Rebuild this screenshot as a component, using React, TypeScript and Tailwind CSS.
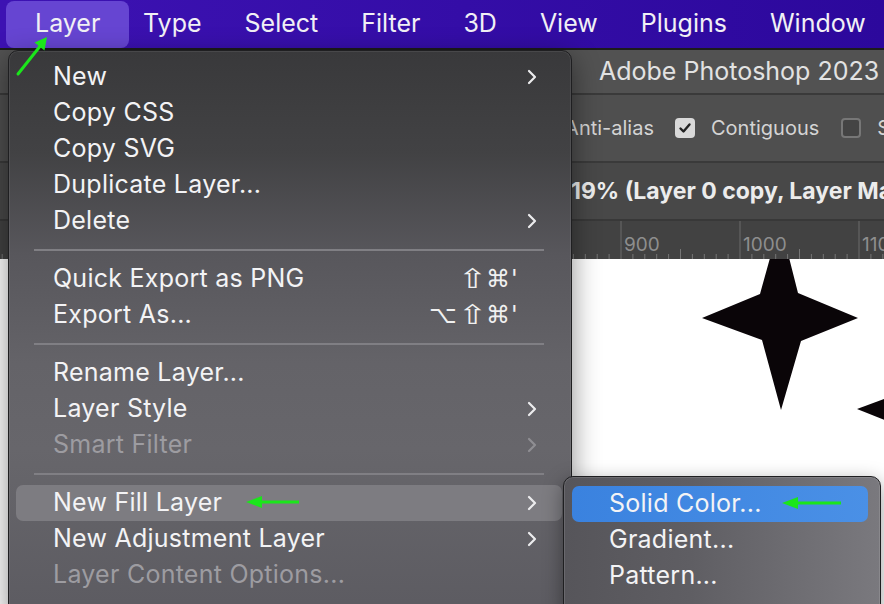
import React from "react";

type Row =
  | { kind: "item"; label: string; sub?: boolean; disabled?: boolean; shortcut?: string[]; active?: boolean }
  | { kind: "sep" };

const rows: Row[] = [
  { kind: "item", label: "New", sub: true },
  { kind: "item", label: "Copy CSS" },
  { kind: "item", label: "Copy SVG" },
  { kind: "item", label: "Duplicate Layer..." },
  { kind: "item", label: "Delete", sub: true },
  { kind: "sep" },
  { kind: "item", label: "Quick Export as PNG", shortcut: ["⇧", "⌘", "'"] },
  { kind: "item", label: "Export As...", shortcut: ["⌥", "⇧", "⌘", "'"] },
  { kind: "sep" },
  { kind: "item", label: "Rename Layer..." },
  { kind: "item", label: "Layer Style", sub: true },
  { kind: "item", label: "Smart Filter", sub: true, disabled: true },
  { kind: "sep" },
  { kind: "item", label: "New Fill Layer", sub: true, active: true },
  { kind: "item", label: "New Adjustment Layer", sub: true },
  { kind: "item", label: "Layer Content Options...", disabled: true },
];

function Chevron({ dim }: { dim?: boolean }) {
  return (
    <svg width="10" height="16" viewBox="0 0 10 16" className="shrink-0">
      <path d="M2 2 L8 8 L2 14" fill="none" stroke={dim ? "#8f8e93" : "#ececee"} strokeWidth="2.2" strokeLinecap="round" strokeLinejoin="round" />
    </svg>
  );
}

function Ruler() {
  const ticks: React.ReactNode[] = [];
  const step = 119 / 10;
  for (let i = -60; i <= 30; i++) {
    const x = 621 + i * step;
    if (x < 0 || x > 884) continue;
    const m = ((i % 10) + 10) % 10;
    const h = m === 0 ? 38 : m === 5 ? 10 : 5;
    ticks.push(<line key={i} x1={x} x2={x} y1={38 - h} y2={38} stroke={m === 0 ? "#6a6a6a" : "#767676"} strokeWidth="1" />);
  }
  return (
    <svg width="884" height="38" className="block">
      {ticks}
      <text x="624" y="30" fill="#8e8e8e" fontSize="19" fontFamily="Inter, sans-serif">900</text>
      <text x="743" y="30" fill="#8e8e8e" fontSize="19" fontFamily="Inter, sans-serif">1000</text>
      <text x="862" y="30" fill="#8e8e8e" fontSize="19" fontFamily="Inter, sans-serif">1100</text>
    </svg>
  );
}

const glyphCls: Record<string, string> = {
  "⌥": "w-[29px]",
  "⇧": "w-[28px] text-[27px] scale-x-[1.3] origin-left",
  "⌘": "w-[25px]",
  "'": "w-[8px]",
};

export default function App() {
  return (
    <div className="relative w-[884px] h-[604px] overflow-hidden bg-[#3c3c3c] font-['Inter',_'Liberation_Sans',_sans-serif]">
      {/* macOS menu bar */}
      <div className="h-[48px] flex items-center pl-[6px] bg-gradient-to-r from-[#3d12b3] to-[#2c089c] text-[25px] text-[#f1f0f5] whitespace-nowrap">
        <div className="h-[47px] w-[123px] shrink-0 flex items-center pl-[29px] rounded-[8px] bg-[#6645d2]">Layer</div>
        <div className="flex items-center gap-[43px] ml-[14px]">
          <span>Type</span>
          <span>Select</span>
          <span>Filter</span>
          <span>3D</span>
          <span>View</span>
          <span>Plugins</span>
          <span>Window</span>
        </div>
      </div>
      <div className="h-[2px] bg-[#1c1c1c]" />
      {/* title bar */}
      <div className="h-[43px] flex items-center pl-[599px] bg-[#525252] text-[25px] text-[#e2e2e2] whitespace-nowrap">Adobe Photoshop 2023</div>
      <div className="h-[2px] bg-[#3a3a3a]" />
      {/* options bar */}
      <div className="h-[66px] flex items-center bg-[#4f4f4f] text-[20px] text-[#d4d4d4] whitespace-nowrap">
        <span className="w-[654px] shrink-0 text-right">Anti-alias</span>
        <span className="ml-[21px] w-[20px] h-[20px] shrink-0 rounded-[4px] bg-[#d9d9d9] flex items-center justify-center">
          <svg width="14" height="14" viewBox="0 0 14 14">
            <path d="M2.5 7.5 L5.5 10.5 L11.5 3.5" fill="none" stroke="#222" strokeWidth="2.4" strokeLinecap="round" strokeLinejoin="round" />
          </svg>
        </span>
        <span className="ml-[16px]">Contiguous</span>
        <span className="ml-[22px] w-[20px] h-[20px] shrink-0 rounded-[4px] border-[2px] border-[#777777] bg-[#444444]" />
        <span className="ml-[16px]">Sample All Layers</span>
      </div>
      <div className="h-[2px] bg-[#3a3a3a]" />
      {/* document tab */}
      <div className="h-[56px] flex items-center pl-[571px] bg-[#484848] text-[23px] font-bold text-[#ececec] whitespace-nowrap">19% (Layer 0 copy, Layer Mask/8) *</div>
      <div className="h-[2px] bg-[#383838]" />
      {/* ruler */}
      <div className="h-[38px] bg-[#424242]">
        <Ruler />
      </div>
      {/* canvas */}
      <div className="relative h-[345px] bg-white">
        <svg width="884" height="345" className="absolute left-0 top-0">
          <g transform="translate(0,-259)">
            <polygon points="780,222 798,293 858,318 801,341 781,410 762,340 702,318 760,294" fill="#0a0508" />
            <polygon points="857,409 900,393 900,426" fill="#0a0508" />
          </g>
        </svg>
      </div>

      {/* Layer menu */}
      <div className="absolute left-[8px] top-[50px] w-[564px] h-[570px] rounded-[10px] border border-[#1f1f21] pl-[7px] pr-[9px] pt-[8px] shadow-[0_8px_28px_rgba(0,0,0,0.45),inset_0_0_0_1px_rgba(255,255,255,0.08)] bg-[linear-gradient(180deg,#39393b_0%,#424244_18%,#58575c_36%,#646368_55%,#67666b_70%,#5c5b61_100%)] text-[25px] tracking-[0.25px] whitespace-nowrap">
        {rows.map((r, i) =>
          r.kind === "sep" ? (
            <div key={i} className="h-[22px] flex items-center px-[18px]">
              <div className="h-[2px] w-full bg-[#807f84]" />
            </div>
          ) : (
            <div
              key={i}
              className={
                "h-[36px] flex items-center pl-[37px] pr-[25px] rounded-[7px] " +
                (r.active ? "bg-[#7d7c81] " : "") +
                (r.disabled ? "text-[#9d9ca1]" : "text-[#f3f3f5]")
              }
            >
              <span>{r.label}</span>
              <span className="flex-1" />
              {r.shortcut && (
                <span className="mr-[6px] flex items-center text-[24px] tracking-normal font-['DejaVu_Sans',_sans-serif] text-[#f0f0f0]">
                  {r.shortcut.map((g, j) => (
                    <span key={j} className={glyphCls[g] + " inline-block"}>{g}</span>
                  ))}
                </span>
              )}
              <span className="w-[12px] flex justify-end">{r.sub && <Chevron dim={r.disabled} />}</span>
            </div>
          )
        )}
      </div>

      {/* submenu */}
      <div className="absolute left-[563px] top-[476px] w-[318px] h-[140px] rounded-[10px] border border-[#1f1f21] pl-[8px] pr-[12px] pt-[9px] shadow-[0_6px_20px_rgba(0,0,0,0.4),inset_0_0_0_1px_rgba(255,255,255,0.12)] bg-[linear-gradient(90deg,#56555a_0%,#5f5e63_40%,#7a797e_100%)] text-[25px] tracking-[0.25px] text-[#f3f3f5] whitespace-nowrap">
        <div className="h-[36px] flex items-center pl-[37px] rounded-[7px] bg-[linear-gradient(90deg,#3a82df,#4a90e6)]">Solid Color...</div>
        <div className="h-[36px] flex items-center pl-[37px]">Gradient...</div>
        <div className="h-[36px] flex items-center pl-[37px]">Pattern...</div>
      </div>

      {/* annotation arrows */}
      <svg width="884" height="604" className="absolute left-0 top-0 pointer-events-none">
        <line x1="18" y1="74" x2="41" y2="45" stroke="#1be61b" strokeWidth="3" strokeLinecap="round" />
        <polygon points="47,37 44.5,50.5 34.5,42.5" fill="#1be61b" />
        <line x1="258" y1="502" x2="299" y2="502" stroke="#1be61b" strokeWidth="3" />
        <polygon points="246,502 262,496 262,508" fill="#1be61b" />
        <line x1="794" y1="503" x2="841" y2="503" stroke="#1be61b" strokeWidth="3" />
        <polygon points="782,503 798,497 798,509" fill="#1be61b" />
      </svg>
    </div>
  );
}
